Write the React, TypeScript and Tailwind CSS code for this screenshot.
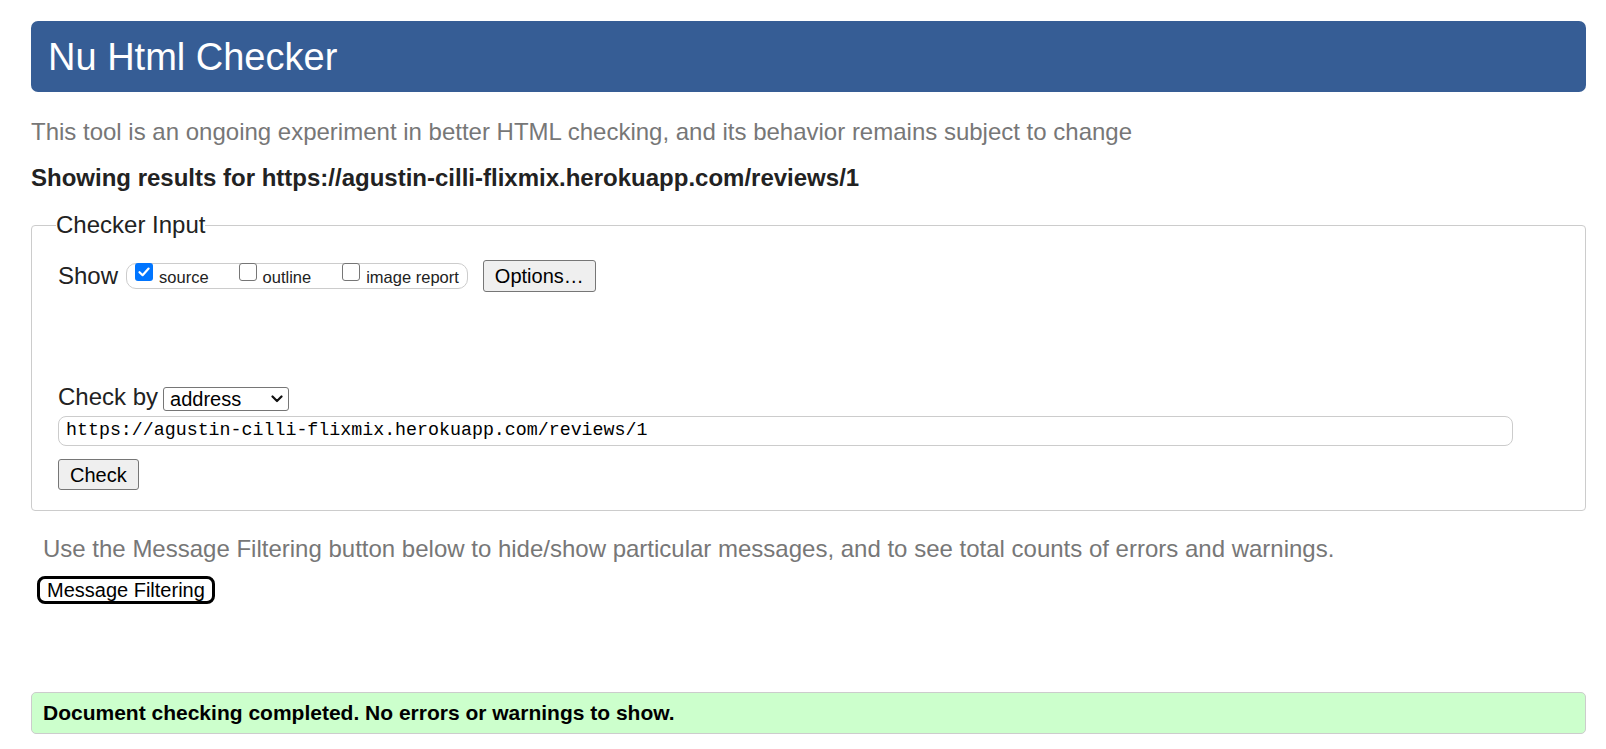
import React from "react";

function Box({ checked }: { checked?: boolean }) {
  if (checked) {
    return (
      <span className="flex h-[18px] w-[18px] shrink-0 items-center justify-center rounded-[3px] bg-[#0075ff]">
        <svg width="14" height="14" viewBox="0 0 14 14" fill="none">
          <path d="M2.5 7.2 L5.6 10.2 L11.6 3.6" stroke="white" strokeWidth="2.2" strokeLinecap="round" strokeLinejoin="round" />
        </svg>
      </span>
    );
  }
  return <span className="block h-[18px] w-[18px] shrink-0 rounded-[3px] border-[1.5px] border-[#767676] bg-white" />;
}

export default function App() {
  return (
    <div className="min-h-screen bg-white pl-[31px] pr-[20px] pt-[21px] font-['Liberation_Sans',Arial,sans-serif] text-[#222]">
      <div className="flex h-[71px] items-center rounded-[7px] bg-[#365d95] pl-[17px] text-[38px] text-white">
        <span className="mt-[2px]">Nu Html Checker</span>
      </div>
      <p className="mt-[26px] text-[24px] leading-[28px] text-[#777]">
        This tool is an ongoing experiment in better HTML checking, and its behavior remains subject to change
      </p>
      <p className="mt-[18px] text-[24px] font-bold leading-[28px] text-[#222]">
        Showing results for https://agustin-cilli-flixmix.herokuapp.com/reviews/1
      </p>

      <fieldset className="mt-[18px] rounded-[4px] border border-[#cccccc] px-[26px] pb-[20px]">
        <legend className="-ml-[2px] text-[24px] leading-[30px] text-[#222]">Checker Input</legend>

        <div className="mt-[20px] flex h-[32px] items-center">
          <span className="text-[24px] leading-[28px]">Show</span>
          <div className="ml-[8px] flex h-[26px] items-start rounded-[10px] border border-[#cccccc] pl-[8px] pr-[8px]">
            <span className="-mt-[1px] flex items-start">
              <Box checked />
              <span className="ml-[6px] mt-[4px] text-[16.5px] leading-[20px]">source</span>
            </span>
            <span className="-mt-[1px] ml-[30px] flex items-start">
              <Box />
              <span className="ml-[6px] mt-[4px] text-[16.5px] leading-[20px]">outline</span>
            </span>
            <span className="-mt-[1px] ml-[31px] flex items-start">
              <Box />
              <span className="ml-[6px] mt-[4px] text-[16.5px] leading-[20px]">image report</span>
            </span>
          </div>
          <button className="ml-[15px] h-[32px] rounded-[3px] border border-[#767676] bg-[#efefef] px-[11px] text-[20px] leading-[24px] text-black">
            Options…
          </button>
        </div>

        <div className="mt-[91px] flex items-end">
          <span className="text-[24px] leading-[28px]">Check by</span>
          <div className="ml-[5px] flex h-[24px] w-[126px] items-center justify-between rounded-[3px] border border-[#767676] bg-white pl-[6px] pr-[5px] text-[20px] leading-[22px] text-black">
            <span>address</span>
            <svg width="12" height="8" viewBox="0 0 12 8" fill="none">
              <path d="M1.5 1.5 L6 6 L10.5 1.5" stroke="#111" strokeWidth="2.2" strokeLinecap="round" strokeLinejoin="round" />
            </svg>
          </div>
        </div>

        <div className="mt-[5px] flex h-[30px] w-[1455px] items-center rounded-[8px] border border-[#cccccc] pl-[7px] font-['Liberation_Mono',monospace] text-[18.3px] text-black">
          https://agustin-cilli-flixmix.herokuapp.com/reviews/1
        </div>

        <button className="mt-[13px] block h-[31px] rounded-[3px] border border-[#767676] bg-[#efefef] px-[11px] text-[20px] leading-[24px] text-black">
          Check
        </button>
      </fieldset>

      <p className="mt-[24px] pl-[12px] text-[24px] leading-[28px] text-[#777]">
        Use the Message Filtering button below to hide/show particular messages, and to see total counts of errors and warnings.
      </p>
      <button className="ml-[6px] mt-[13px] block h-[28px] rounded-[8px] border-[3px] border-black bg-white px-[7px] text-[20px] leading-[22px] text-black">
        Message Filtering
      </button>

      <div className="mt-[88px] flex h-[42px] items-center rounded-[5px] border border-[#cccccc] bg-[#ccffcc] pl-[11px] text-[21px] font-bold text-black">
        Document checking completed. No errors or warnings to show.
      </div>
    </div>
  );
}
